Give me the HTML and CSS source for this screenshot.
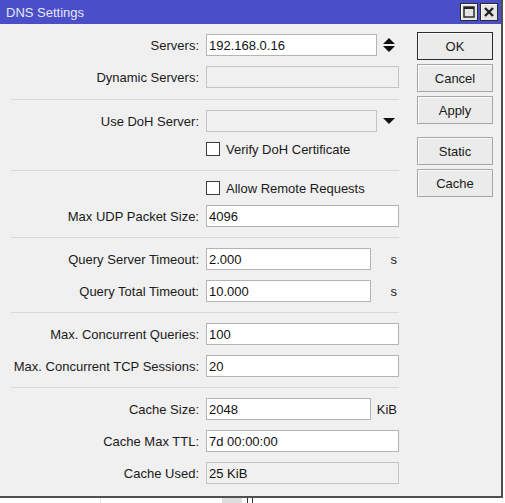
FILE: index.html
```html
<!DOCTYPE html>
<html>
	<head>
		<link rel="stylesheet" href="styles.css">
	</head>
	<body>
		<div class="window">
			<div class="titlebar">
				<span class="title">DNS Settings</span>
				<span class="tb-btn">
					<svg width="12" height="12" viewBox="0 0 12 12"><rect x="1" y="1" width="10" height="10" fill="none" stroke="#222" stroke-width="1.4"/><rect x="1" y="1" width="10" height="2" fill="#222"/></svg>
				</span>
				<span class="tb-btn">
					<svg width="12" height="12" viewBox="0 0 12 12"><path d="M2 2 L10 10 M10 2 L2 10" stroke="#222" stroke-width="2.4"/></svg>
				</span>
			</div>

			<div class="content">
				<div class="form">
					<div class="row">
						<label>Servers:</label>
						<input class="field mid" type="text" value="192.168.0.16" readonly>
						<svg class="icon" width="12" height="16" viewBox="0 0 12 16"><path d="M0 7 L6 1 L12 7 Z M0 9 L12 9 L6 15 Z" fill="#111"/></svg>
					</div>
					<div class="row">
						<label>Dynamic Servers:</label>
						<input class="field off" type="text" value="" readonly>
					</div>

					<div class="sep sep-top"></div>

					<div class="row">
						<label>Use DoH Server:</label>
						<input class="field mid off" type="text" value="" readonly>
						<svg class="icon" width="12" height="8" viewBox="0 0 12 8"><path d="M0 1 L12 1 L6 7 Z" fill="#111"/></svg>
					</div>
					<div class="check-row check-row-tall">
						<span class="box"></span>Verify DoH Certificate
					</div>

					<div class="sep"></div>

					<div class="check-row">
						<span class="box"></span>Allow Remote Requests
					</div>
					<div class="row">
						<label>Max UDP Packet Size:</label>
						<input class="field" type="text" value="4096" readonly>
					</div>

					<div class="sep"></div>

					<div class="row">
						<label>Query Server Timeout:</label>
						<input class="field short" type="text" value="2.000" readonly>
						<span class="unit">s</span>
					</div>
					<div class="row">
						<label>Query Total Timeout:</label>
						<input class="field short" type="text" value="10.000" readonly>
						<span class="unit">s</span>
					</div>

					<div class="sep"></div>

					<div class="row">
						<label>Max. Concurrent Queries:</label>
						<input class="field" type="text" value="100" readonly>
					</div>
					<div class="row">
						<label>Max. Concurrent TCP Sessions:</label>
						<input class="field" type="text" value="20" readonly>
					</div>

					<div class="sep"></div>

					<div class="row">
						<label>Cache Size:</label>
						<input class="field short" type="text" value="2048" readonly>
						<span class="unit">KiB</span>
					</div>
					<div class="row">
						<label>Cache Max TTL:</label>
						<input class="field" type="text" value="7d 00:00:00" readonly>
					</div>
					<div class="row">
						<label>Cache Used:</label>
						<input class="field off" type="text" value="25 KiB" readonly>
					</div>
				</div>

				<div class="side">
					<button class="btn btn-default">OK</button>
					<button class="btn">Cancel</button>
					<button class="btn">Apply</button>
					<button class="btn btn-gap">Static</button>
					<button class="btn">Cache</button>
				</div>
			</div>
		</div>

		<div class="under">
			<span class="under-line"></span>
			<span class="under-block"></span>
			<span class="under-bar"></span>
		</div>
	</body>
</html>
```

FILE: styles.css
```css
body {
	margin: 0;
	background-color: #fff;
	font-family: "Liberation Sans", Arial, sans-serif;
	font-size: 13px;
	color: #1a1a1a;
}

.window {
	width: 501px;
	height: 496px;
	border-right: 2px solid #505050;
	border-bottom: 2px solid #505050;
	background-color: #f0f0f0;
}

.titlebar {
	height: 24px;
	display: flex;
	align-items: center;
	gap: 2px;
	padding: 0 3px 0 6px;
	background-color: #4a4ec8;
}
.title {
	flex: 1;
	color: #e6e6f2;
	font-size: 13px;
}
.tb-btn {
	width: 16px;
	height: 16px;
	display: flex;
	align-items: center;
	justify-content: center;
	background-color: #e4e4e4;
	border: 1px solid #2a2a2a;
	box-shadow: inset 1px 1px 0 #fff;
}

.content {
	display: flex;
	padding-top: 10px;
}

.form {
	width: 388px;
	padding-left: 11px;
}

.row {
	display: flex;
	align-items: center;
	height: 22px;
	margin-bottom: 10px;
}
label {
	width: 188px;
	margin-right: 7px;
	text-align: right;
	white-space: nowrap;
}

.field {
	box-sizing: border-box;
	width: 193px;
	height: 22px;
	margin: 0;
	padding: 0 2px;
	border: 1px solid #b4b4b4;
	background-color: #fff;
	font-family: "Liberation Sans", Arial, sans-serif;
	font-size: 13px;
	color: #111;
	outline: none;
}
.field.mid {
	width: 171px;
}
.field.short {
	width: 165px;
}
.field.off {
	background-color: #f0f0f0;
	border-color: #c4c4c4;
}

.icon {
	margin-left: 6px;
}

.unit {
	flex: 1;
	text-align: right;
	padding-right: 2px;
}

.check-row {
	display: flex;
	align-items: center;
	height: 14px;
	margin-bottom: 10px;
	padding-left: 195px;
}
.check-row-tall {
	align-items: flex-start;
	height: 18px;
}
.box {
	box-sizing: border-box;
	width: 14px;
	height: 14px;
	margin-right: 6px;
	border: 1px solid #3c3c3c;
	background-color: #fff;
}

.sep {
	height: 1px;
	margin-bottom: 10px;
	background-color: #d9d9d9;
}
.sep-top {
	margin-top: 11px;
}

.side {
	display: flex;
	flex-direction: column;
	gap: 4px;
	margin-top: -2px;
	margin-left: 18px;
}
.btn {
	box-sizing: border-box;
	width: 76px;
	height: 28px;
	margin: 0;
	border: 1px solid #a6a6a6;
	background-color: #ebebeb;
	font-family: "Liberation Sans", Arial, sans-serif;
	font-size: 13px;
	color: #1a1a1a;
	box-shadow: inset 1px 1px 0 #fbfbfb;
	cursor: pointer;
}
.btn-default {
	border-color: #2c2c2c;
}
.btn-gap {
	margin-top: 9px;
}

.under {
	display: flex;
	height: 5px;
}
.under-line {
	width: 1px;
	margin-left: 100px;
	background-color: #e2e2e2;
}
.under-block {
	width: 20px;
	margin-left: 121px;
	background-color: #dedede;
}
.under-bar {
	width: 4px;
	margin-left: 5px;
	border-left: 1px solid #333;
	border-right: 1px solid #333;
}
```
